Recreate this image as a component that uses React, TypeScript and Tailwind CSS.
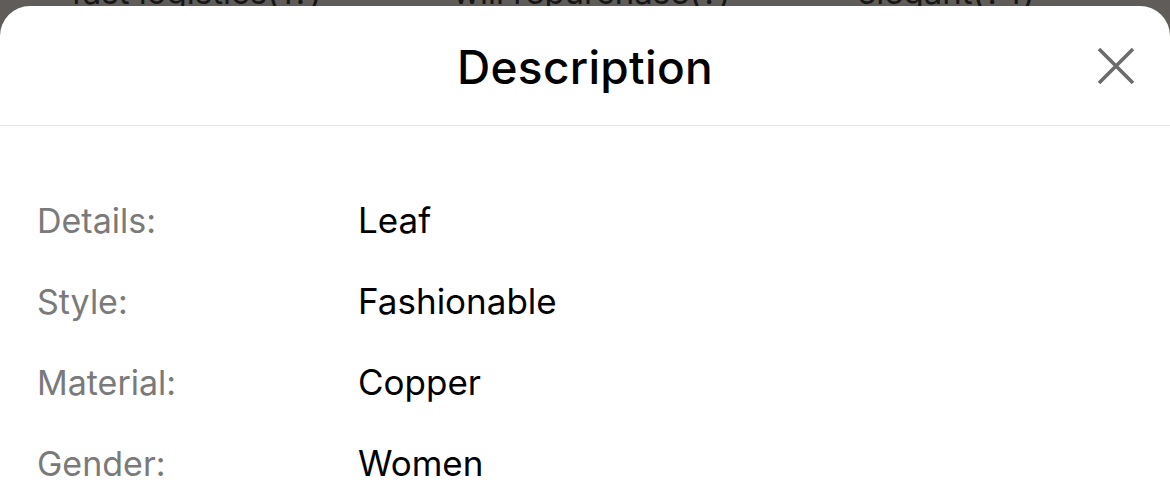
const specs = [
  { label: "Details:", value: "Leaf" },
  { label: "Style:", value: "Fashionable" },
  { label: "Material:", value: "Copper" },
  { label: "Gender:", value: "Women" },
];

const App = () => {
  return (
    <div
      className="flex h-[501px] w-[1170px] flex-col overflow-hidden bg-[#5f5c59]"
      style={{ fontFamily: "Inter, 'Noto Sans', sans-serif" }}
    >
      {/* review tags peeking out behind the sheet */}
      <div className="h-[6px] shrink-0 overflow-hidden">
        <div className="-mt-[27px] flex text-[33px] leading-[38px] text-[#161616]">
          <span className="ml-[71px] w-[382px]">fast logistics(1?)</span>
          <span className="w-[404px]">will repurchase(?)</span>
          <span>elegant(?4)</span>
        </div>
      </div>

      <div className="flex-1 rounded-t-[30px] bg-white">
        <div className="relative flex h-[120px] items-center justify-center border-b border-[#e5e5e5]">
          <h2 className="pt-[4px] text-[46px] font-medium tracking-[0.3px] text-black">Description</h2>
          <button className="absolute right-[34px] top-[40px] text-[#6b6b6b]">
            <svg width="40" height="40" viewBox="0 0 40 40" fill="none">
              <path d="M3 3L37 37M37 3L3 37" stroke="currentColor" strokeWidth="3.6" />
            </svg>
          </button>
        </div>

        <div className="pt-[54px]">
          {specs.map((row) => (
            <div key={row.label} className="flex h-[81px] items-baseline leading-[81px]">
              <p className="w-[358px] shrink-0 pl-[37px] text-[34px] text-[#7a7a7a]">{row.label}</p>
              <p className="text-[35px] text-black">{row.value}</p>
            </div>
          ))}
        </div>
      </div>
    </div>
  );
};

export default App;
